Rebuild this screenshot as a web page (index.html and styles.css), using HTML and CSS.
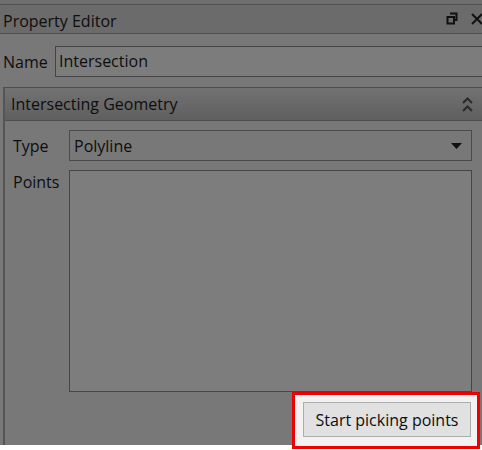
FILE: index.html
```html
<!DOCTYPE html>
<html>
<head>
<meta charset="utf-8">
<link rel="stylesheet" href="styles.css">
</head>
<body>
<div class="panel">
  <div class="top-strip"></div>
  <div class="titlebar">
    <span class="title">Property Editor</span>
    <span class="title-icons">
      <svg class="ico-float" width="12" height="13" viewBox="0 0 12 13">
        <path d="M4 1.5h6.5v6.5h-2" fill="none" stroke="#111" stroke-width="2"/>
        <rect x="1.5" y="5" width="6.5" height="6.5" fill="none" stroke="#111" stroke-width="2"/>
      </svg>
      <svg class="ico-close" width="12" height="12" viewBox="0 0 12 12">
        <path d="M1 1L11 11M11 1L1 11" stroke="#111" stroke-width="2"/>
      </svg>
    </span>
  </div>
  <div class="content">
    <div class="name-row">
      <span class="label name-label">Name</span>
      <div class="textbox">Intersection</div>
    </div>
    <div class="group">
      <div class="group-header">
        <span class="group-title">Intersecting Geometry</span>
        <svg class="chev" width="11" height="17" viewBox="0 0 11 17">
          <path d="M1 7L5.5 2.5L10 7M1 15L5.5 10.5L10 15" fill="none" stroke="#2a2a2a" stroke-width="2"/>
        </svg>
      </div>
      <div class="group-body">
        <div class="form">
          <span class="label type-label">Type</span>
          <div class="combo">
            <span>Polyline</span>
            <svg width="11" height="6" viewBox="0 0 11 6"><path d="M0 0H11L5.5 6Z" fill="#111"/></svg>
          </div>
          <span class="label points-label">Points</span>
          <div class="points-box"></div>
        </div>
        <div class="button-row">
          <div class="highlight">
            <button class="btn">Start picking points</button>
          </div>
        </div>
      </div>
    </div>
  </div>
</div>
</body>
</html>
```

FILE: styles.css
```css
html, body {
  margin: 0;
  padding: 0;
  background: #ffffff;
}
body {
  width: 482px;
  height: 450px;
  overflow: hidden;
  font-family: "Open Sans", "Noto Sans", sans-serif;
  font-size: 16px;
  color: #0e0e0e;
}
.panel {
  width: 500px;
  height: 445px;
  background: #787878;
  display: flex;
  flex-direction: column;
}
.top-strip {
  height: 4px;
  background: #6f6f6f;
}
.titlebar {
  height: 28px;
  background: #6b6b6b;
  border-top: 1px solid #505050;
  border-bottom: 1px solid #505050;
  display: flex;
  align-items: center;
  padding-left: 3px;
}
.title {
  flex: 1;
  line-height: 28px;
  padding-top: 3px;
}
.title-icons {
  display: flex;
  align-items: center;
  gap: 13px;
  margin-right: 17px;
}
.ico-float { margin-top: -2px; }
.content {
  flex: 1;
  display: flex;
  flex-direction: column;
  background: #787878;
}
.name-row {
  display: flex;
  align-items: center;
  margin-top: 12px;
  padding-left: 3px;
}
.name-label {
  width: 52px;
}
.textbox {
  flex: 1;
  height: 29px;
  line-height: 29px;
  border: 1px solid #454545;
  background: #7c7c7c;
  padding-left: 3px;
}
.group {
  margin-top: 10px;
  margin-left: 3px;
  flex: 1;
  display: flex;
  flex-direction: column;
  border-left: 2px solid #555;
  border-top: 1px solid #4e4e4e;
}
.group-header {
  height: 32px;
  background: linear-gradient(#727272, #5f5f5f);
  border-bottom: 1px solid #4e4e4e;
  display: flex;
  align-items: center;
  padding-left: 6px;
}
.group-title {
  flex: 1;
}
.chev {
  margin-right: 27px;
}
.group-body {
  flex: 1;
  display: flex;
  flex-direction: column;
  padding: 9px 0 0 8px;
}
.form {
  display: grid;
  grid-template-columns: 56px 403px;
  row-gap: 9px;
}
.label {
  color: #0e0e0e;
}
.type-label {
  align-self: center;
}
.points-label {
  padding-top: 1px;
}
.combo {
  height: 29px;
  border: 1px solid #4a4a4a;
  background: #787878;
  display: flex;
  align-items: center;
  justify-content: space-between;
  padding: 0 9px 0 4px;
}
.points-box {
  height: 220px;
  border: 1px solid #464646;
  background: #7d7d7d;
}
.button-row {
  display: flex;
  justify-content: flex-end;
  width: 459px;
  padding-top: 10px;
}
.highlight {
  position: relative;
  margin-right: 1px;
}
.highlight::before {
  content: "";
  position: absolute;
  left: -11px;
  right: -9px;
  top: -10px;
  bottom: -12px;
  background: #f2f2f2;
  border: 3px solid #ee0000;
  box-sizing: border-box;
}
.btn {
  position: relative;
  width: 168px;
  height: 35px;
  background: #e1e1e1;
  border: 1px solid #adadad;
  font-family: "Open Sans", "Noto Sans", sans-serif;
  font-size: 16px;
  color: #0e0e0e;
  padding: 0;
}
```
